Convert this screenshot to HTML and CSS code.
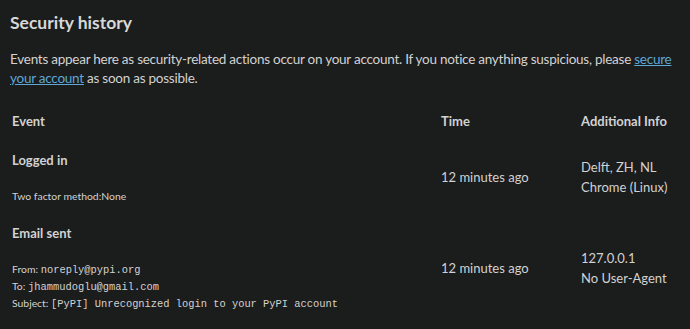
FILE: index.html
```html
<!DOCTYPE html>
<html lang="en">
<head>
<meta charset="utf-8">
<title>Security history</title>
<link rel="stylesheet" href="styles.css">
</head>
<body>
<section class="panel">
  <h2 class="title">Security history</h2>
  <p class="intro">Events appear here as security-related actions occur on your account. If you notice anything suspicious, please <a href="#" class="link">secure your account</a> as soon as possible.</p>
  <table class="events">
    <thead>
      <tr>
        <th class="col-event">Event</th>
        <th class="col-time">Time</th>
        <th class="col-info">Additional Info</th>
      </tr>
    </thead>
    <tbody>
      <tr>
        <td>
          <strong class="event-name">Logged in</strong>
          <div class="details">Two factor method:None</div>
        </td>
        <td>12 minutes ago</td>
        <td>Delft, ZH, NL<br>Chrome (Linux)</td>
      </tr>
      <tr>
        <td>
          <strong class="event-name">Email sent</strong>
          <div class="details">
            <div>From: <code>noreply@pypi.org</code></div>
            <div>To: <code>jhammudoglu@gmail.com</code></div>
            <div>Subject: <code>[PyPI] Unrecognized login to your PyPI account</code></div>
          </div>
        </td>
        <td>12 minutes ago</td>
        <td>127.0.0.1<br>No User-Agent</td>
      </tr>
    </tbody>
  </table>
</section>
</body>
</html>
```
FILE: styles.css
```css
html, body {
  margin: 0;
  padding: 0;
  background: #1b1c1c;
}
body {
  font-family: Lato, "Noto Sans", sans-serif;
  color: #d2d2d2;
}
.panel {
  padding: 10px 6px 0 10px;
}
.title {
  margin: 0;
  font-size: 17.5px;
  line-height: 26px;
  font-weight: 700;
  color: #d8d8d8;
}
.intro {
  margin: 14px 0 0 0;
  font-size: 13.5px;
  letter-spacing: -0.25px;
  line-height: 19px;
}
.link {
  color: #5ea7d6;
  text-decoration: underline;
}
.events {
  width: 674px;
  border-collapse: collapse;
  margin-top: 13px;
  font-size: 13px;
}
.events th {
  text-align: left;
  font-weight: 700;
  padding: 10px 2px;
  line-height: 20px;
}
.events td {
  vertical-align: middle;
  padding: 9px 2px 10px 2px;
  line-height: 20px;
}
.col-event { width: 425px; }
.col-time { width: 136px; }
.event-name {
  display: block;
  font-weight: 700;
}
.details {
  margin-top: 18px;
  font-size: 10.4px;
  line-height: 16px;
}
code {
  font-family: "Liberation Mono", monospace;
  font-size: 10.4px;
}
```
